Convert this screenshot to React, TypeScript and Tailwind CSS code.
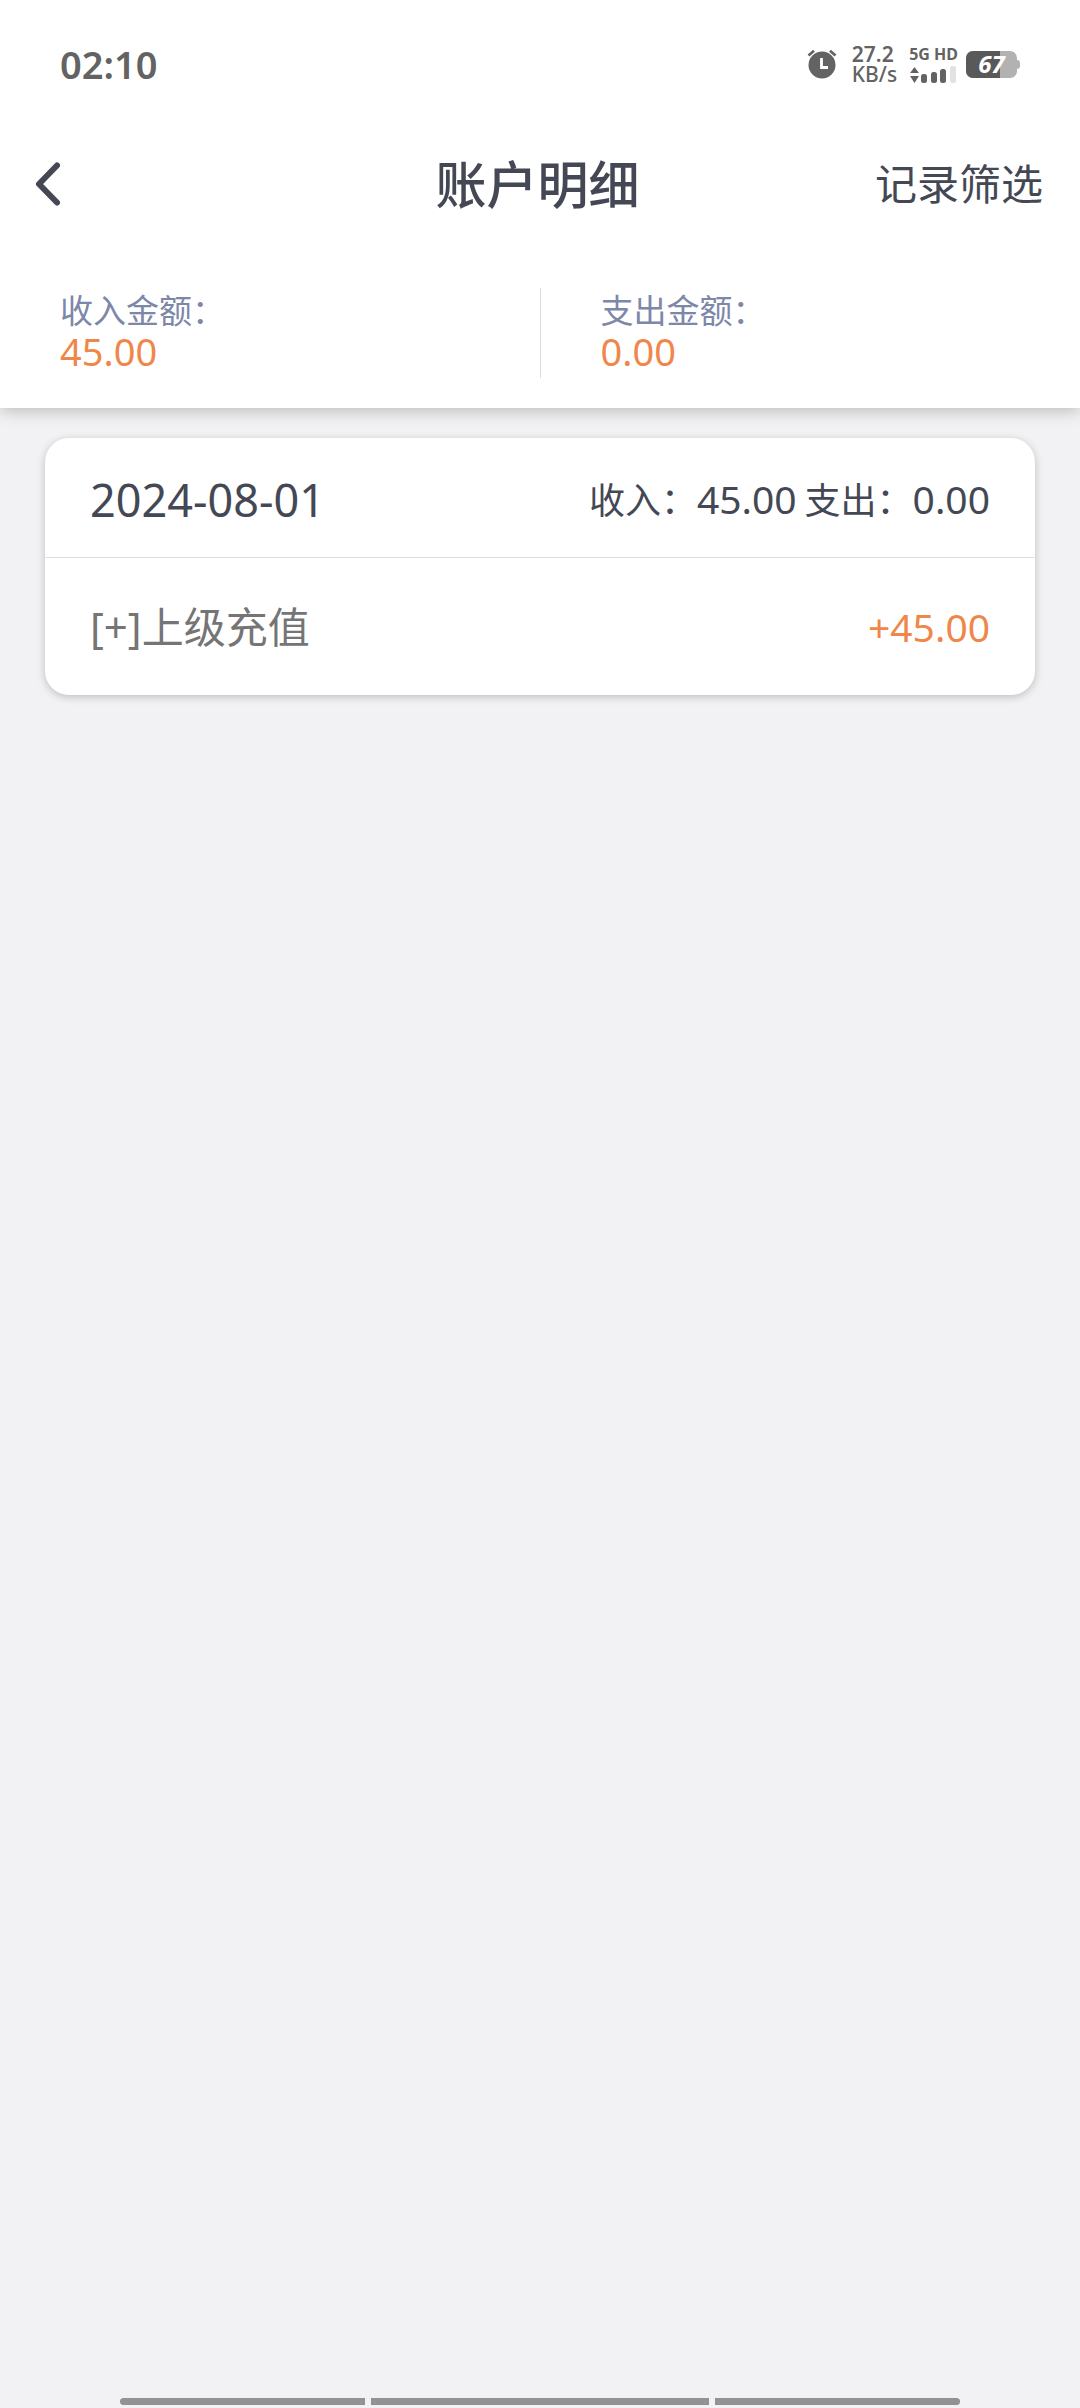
import { useState } from "react"

type RecordItem = { id: number; label: string; amount: number }
type DayGroup = { date: string; items: RecordItem[] }

const days: DayGroup[] = [
  { date: "2024-08-01", items: [{ id: 1, label: "上级充值", amount: 45 }] },
]

const sum = (items: RecordItem[], sign: 1 | -1) =>
  items.filter((i) => i.amount * sign > 0).reduce((t, i) => t + Math.abs(i.amount), 0)

function AlarmIcon() {
  return (
    <svg viewBox="0 0 30 30" className="w-[30px] h-[30px]" aria-hidden="true">
      <circle cx="15" cy="16" r="13.5" fill="#636363" />
      <path d="M1.5 6.5 7 1.8M28.5 6.5 23 1.8" stroke="#636363" strokeWidth="2.8" fill="none" />
      <path d="M14.5 9v9.5h6.5" stroke="#fff" strokeWidth="2.8" fill="none" />
    </svg>
  )
}

function SignalIcon() {
  return (
    <svg viewBox="0 0 48 18" className="w-12 h-[18px]" aria-hidden="true">
      <path d="M5.5 1 10 7H1ZM5.5 17 10 10H1Z" fill="#636363" />
      <rect x="12" y="8" width="6" height="9" rx="2.5" fill="#636363" />
      <rect x="22" y="6" width="6" height="11" rx="2.5" fill="#636363" />
      <rect x="31" y="3" width="6" height="14" rx="2.5" fill="#636363" />
      <rect x="41" y="0" width="6" height="17" rx="2" fill="#e2e2e2" />
    </svg>
  )
}

function Battery({ level }: { level: number }) {
  return (
    <div className="flex items-center">
      <div className="relative flex w-[51px] h-[27px] items-center justify-center rounded-[7px] bg-[#b2b2b2]">
        <div className="absolute inset-y-0 left-0 rounded-l-[7px] bg-[#595959]" style={{ width: `${level}%` }} />
        <span className="relative text-2xl leading-7 font-bold italic text-white">{level}</span>
      </div>
      <div className="w-[3px] h-[9px] rounded-r bg-[#b2b2b2]" />
    </div>
  )
}

function StatusBar() {
  return (
    <div className="flex h-32 items-center justify-between px-[60px] text-[#636363]">
      <span className="text-[38px] leading-10 font-semibold">02:10</span>
      <div className="flex items-center">
        <AlarmIcon />
        <div className="ml-[15px] flex flex-col text-[21px] leading-5 font-semibold">
          <span>27.2</span>
          <span className="font-medium">KB/s</span>
        </div>
        <div className="ml-3 flex flex-col gap-0.5">
          <span className="text-base leading-5 font-bold">5G HD</span>
          <SignalIcon />
        </div>
        <div className="ml-2">
          <Battery level={67} />
        </div>
      </div>
    </div>
  )
}

function Summary({ label, value }: { label: string; value: number }) {
  return (
    <div className="flex flex-1 flex-col justify-center pb-1 pl-[60px]">
      <span className="text-[33px] leading-10 text-[#7d87a8]">{label}：</span>
      <span className="text-[38px] leading-10 text-[#f0874a]">{value.toFixed(2)}</span>
    </div>
  )
}

function DayCard({ day }: { day: DayGroup }) {
  return (
    <section className="rounded-3xl bg-white shadow-[0_2px_8px_rgba(0,0,0,0.22)]">
      <div className="flex h-[120px] items-center justify-between border-b border-[#dedee0] px-[45px] pt-1 text-[#444854]">
        <h2 className="text-[45px] leading-[60px]">{day.date}</h2>
        <div className="flex items-center gap-2 text-[39px] leading-[60px]">
          <p>
            <span className="text-[36px]">收入：</span>
            {sum(day.items, 1).toFixed(2)}
          </p>
          <p>
            <span className="text-[36px]">支出：</span>
            {sum(day.items, -1).toFixed(2)}
          </p>
        </div>
      </div>
      <ul>
        {day.items.map((item) => (
          <li key={item.id} className="flex h-[137px] items-center justify-between px-[45px]">
            <span className="text-[42px] leading-[60px] text-[#757575]">
              [{item.amount > 0 ? "+" : "-"}]{item.label}
            </span>
            <span className="text-[39px] leading-[60px] text-[#f0874a]">
              {item.amount > 0 ? "+" : ""}
              {item.amount.toFixed(2)}
            </span>
          </li>
        ))}
      </ul>
    </section>
  )
}

export default function App() {
  const [filtering, setFiltering] = useState(false)
  const all = days.flatMap((d) => d.items)

  return (
    <div
      lang="zh-CN"
      className="flex min-h-screen flex-col bg-[#f2f2f4] font-['Noto_Sans','Noto_Sans_CJK_SC',sans-serif]"
    >
      <header className="bg-white shadow-[0_2px_16px_rgba(0,0,0,0.25)]">
        <StatusBar />
        <nav className="grid h-28 grid-cols-3 items-center pl-8 pr-[37px] text-[#444854]">
          <button aria-label="返回" className="justify-self-start">
            <svg viewBox="0 0 32 48" className="w-8 h-12" fill="none" stroke="currentColor" strokeWidth="6" strokeLinecap="round" strokeLinejoin="round" aria-hidden="true">
              <path d="M25 5.500 7 24l18 18.500" />
            </svg>
          </button>
          <h1 className="justify-self-center text-[51px] leading-[60px] font-medium">账户明细</h1>
          <button
            aria-pressed={filtering}
            onClick={() => setFiltering((v) => !v)}
            className="justify-self-end text-[42px] leading-[60px]"
          >
            记录筛选
          </button>
        </nav>
        <div className="flex pt-12 pb-[30px]">
          <Summary label="收入金额" value={sum(all, 1)} />
          <div className="h-[90px] w-px bg-[#dedee0]" />
          <Summary label="支出金额" value={sum(all, -1)} />
        </div>
      </header>

      <main className="flex flex-1 flex-col gap-[30px] px-[45px] pt-[30px]">
        {days.map((day) => (
          <DayCard key={day.date} day={day} />
        ))}
      </main>

      <div className="flex gap-1.5 px-[120px] pb-[3px]" aria-hidden="true">
        <div className="h-[7px] flex-[245] rounded-l-full bg-[#929292]" />
        <div className="h-[7px] flex-[338] bg-[#929292]" />
        <div className="h-[7px] flex-[245] rounded-r-full bg-[#929292]" />
      </div>
    </div>
  )
}
